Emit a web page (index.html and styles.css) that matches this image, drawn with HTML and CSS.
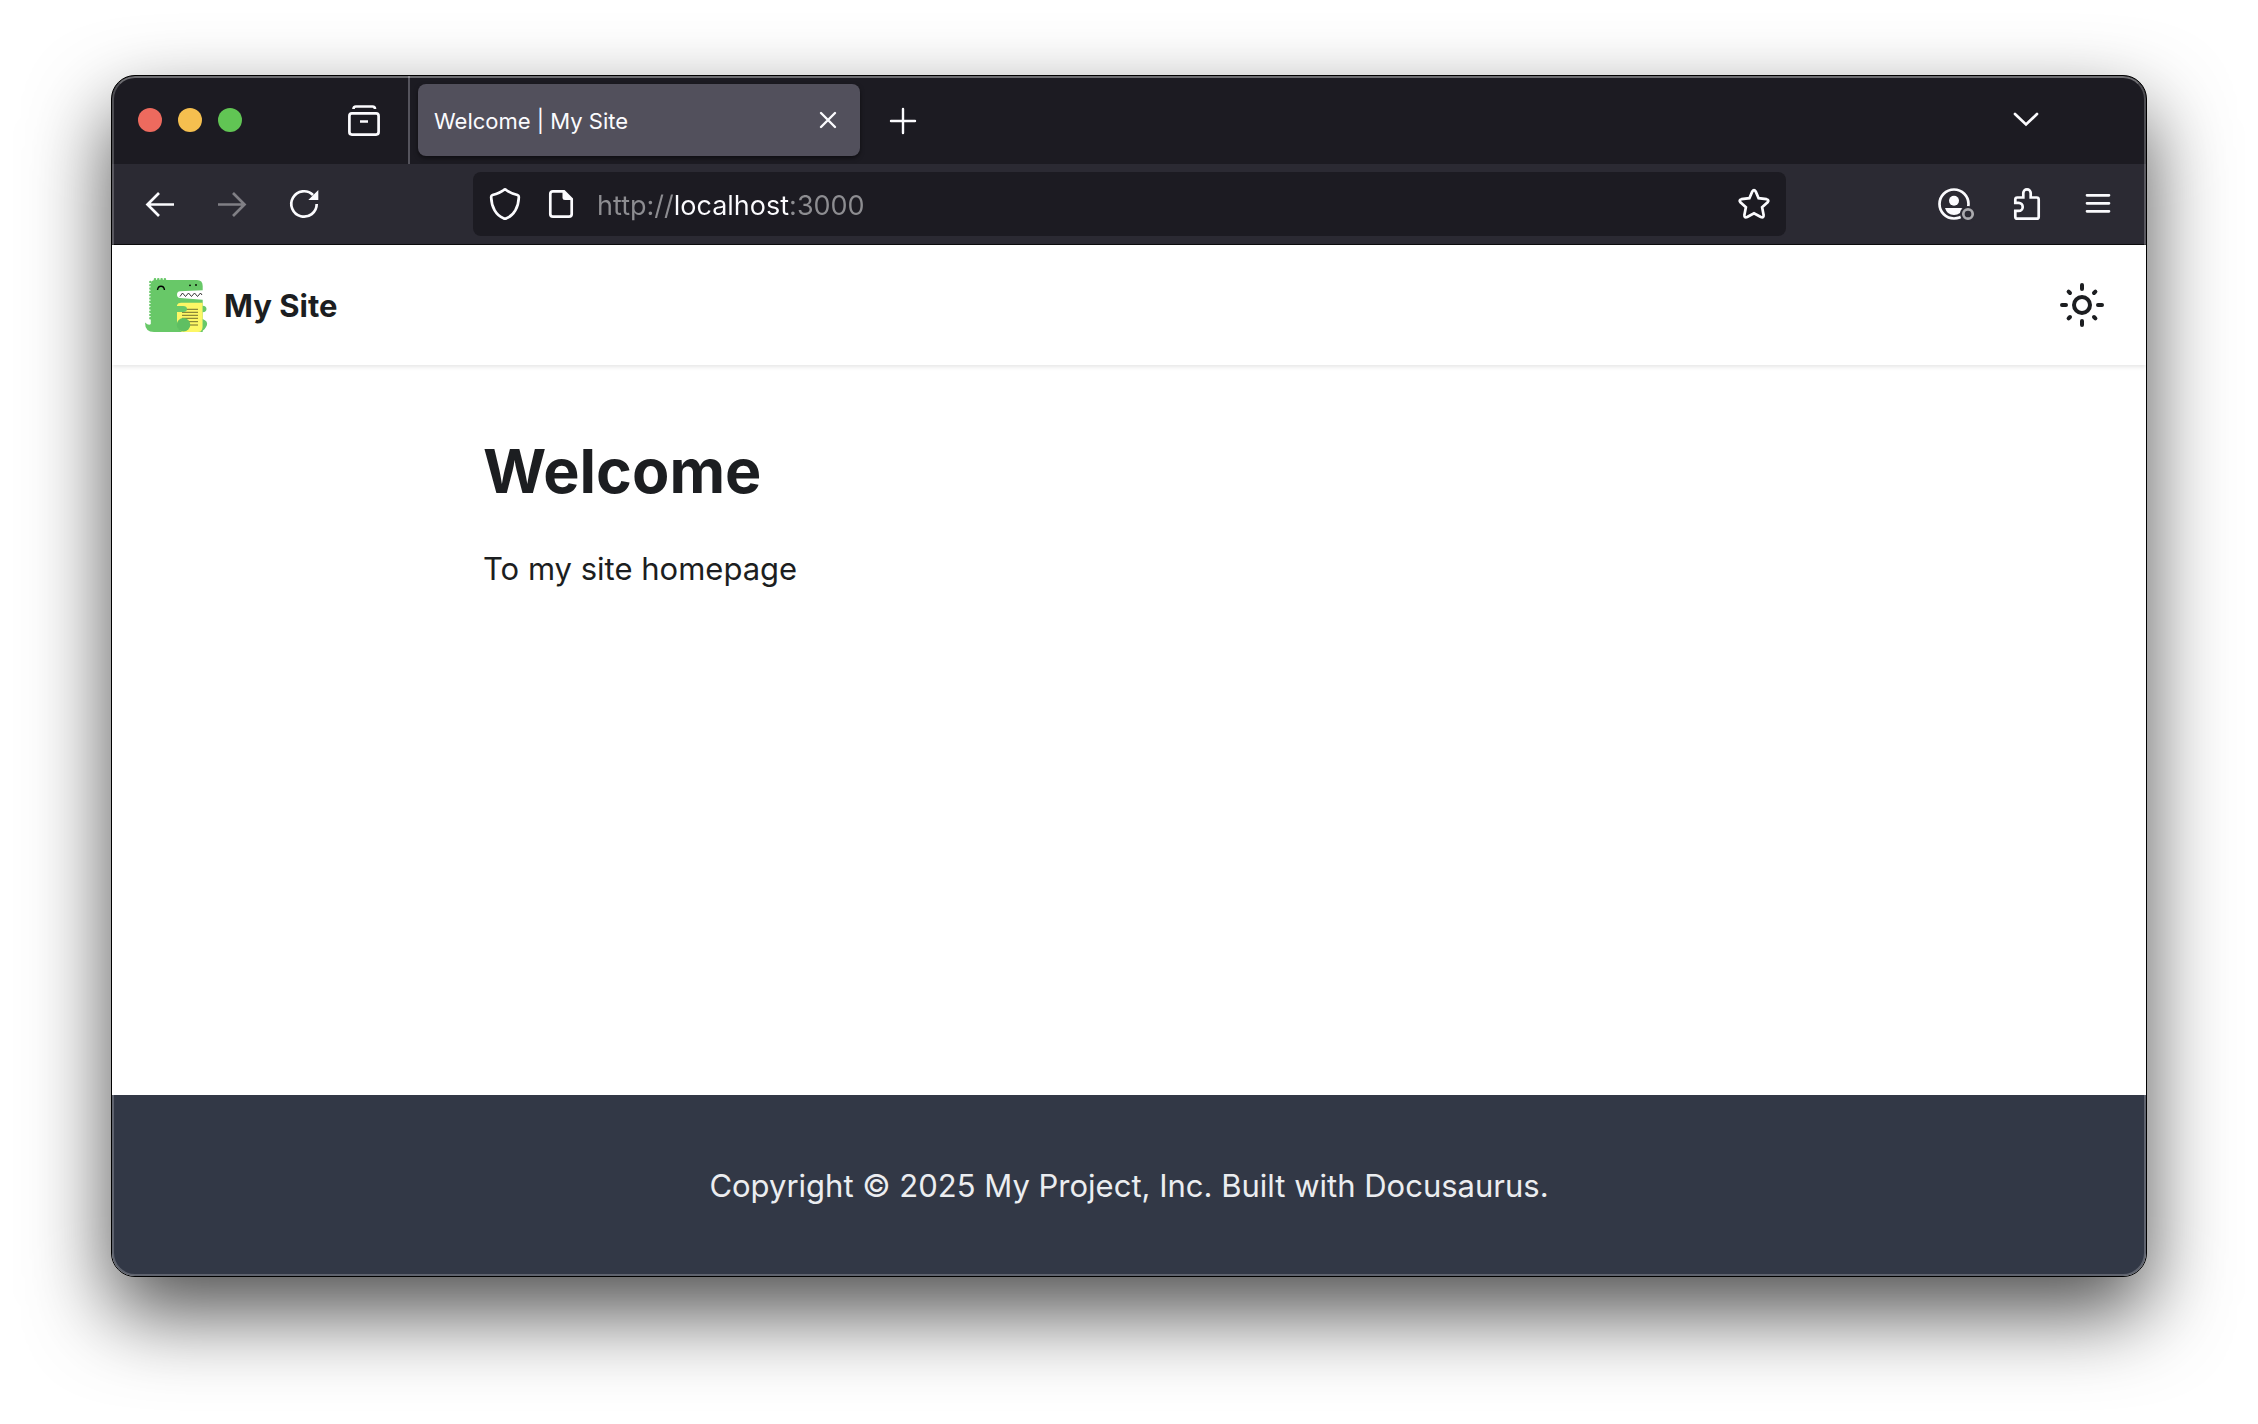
FILE: index.html
```html
<!DOCTYPE html>
<html lang="en">
<head>
<meta charset="utf-8">
<meta name="viewport" content="width=device-width, initial-scale=1">
<title>Welcome | My Site</title>
<link rel="stylesheet" href="styles.css">
</head>
<body>
<div class="window">
  <div class="tabstrip">
    <div class="lights">
      <button class="light light-close" aria-label="Close window"></button>
      <button class="light light-minimize" aria-label="Minimize window"></button>
      <button class="light light-zoom" aria-label="Zoom window"></button>
    </div>
    <button class="icon-button" aria-label="Recent browsing">
      <svg class="icon" viewBox="0 0 32 32"><path d="M5.500 5C5.500 3.500 6.500 2.500 8 2.500H24.500C26 2.500 27 3.500 27 5"/><rect x="1.400" y="9.400" width="29.200" height="21.200" rx="2.500"/><path d="M12 17.500H20"/></svg>
    </button>
    <div class="tabs">
      <div class="tab">
        <span class="tab-title">Welcome | My Site</span>
        <button class="tab-close" aria-label="Close tab"><svg class="icon" viewBox="0 0 32 32"><path class="thin" d="M9 9L23 23M23 9L9 23"/></svg></button>
      </div>
      <button class="icon-button new-tab" aria-label="New tab"><svg class="icon" viewBox="0 0 32 32"><path class="thin" d="M16 5V29M4 17H28"/></svg></button>
    </div>
    <button class="icon-button all-tabs" aria-label="List all tabs"><svg class="icon" viewBox="0 0 32 32"><path d="M5 10L16 20.500L27 10" stroke-linecap="round"/></svg></button>
  </div>

  <div class="toolbar">
    <div class="tools">
      <button class="icon-button" aria-label="Back"><svg class="icon" viewBox="0 0 32 32"><path d="M30 16.500H3.500M15 5L3.500 16.500L15 28"/></svg></button>
      <button class="icon-button" aria-label="Forward" disabled><svg class="icon" viewBox="0 0 32 32"><path d="M2 16.500H28.500M17 5L28.500 16.500L17 28"/></svg></button>
      <button class="icon-button" aria-label="Reload"><svg class="icon" viewBox="0 0 32 32"><path d="M28.700 16A12.700 12.700 0 1 1 25 7"/><path class="solid" d="M30.300 2V12H20.300Z"/></svg></button>
    </div>
    <div class="urlbar">
      <button class="url-button" aria-label="Tracking protection"><svg class="icon" viewBox="0 0 32 32"><path d="M14.800 2Q16 1 17.200 2Q21 5 28.500 7Q30 7.500 29.800 9.500C29.500 19 25 27.500 17.500 30.200Q16 31 14.500 30.200C7 27.500 2.500 19 2.200 9.500Q2 7.500 3.500 7Q11 5 14.800 2Z"/></svg></button>
      <button class="url-button" aria-label="Site information"><svg class="icon" viewBox="0 0 32 32"><path d="M8 3.300H19L26.700 11V26Q26.700 28.700 24 28.700H8Q5.300 28.700 5.300 26V6Q5.300 3.300 8 3.300Z"/><path class="solid" d="M17.500 3V9.500Q17.500 12 20 12H27L19 3Z"/></svg></button>
      <input class="url-input" type="text" aria-label="Address" value="http://localhost:3000" spellcheck="false">
      <button class="url-button" aria-label="Bookmark this page"><svg class="icon" viewBox="0 0 32 32"><path d="M14.300 3.500Q16 .8 17.700 3.500L20.600 10.200L28.500 11.200Q31.500 12 29.600 14.300L24.100 19.300L25.600 27Q25.800 30.300 22.800 29L16 25.200L9.200 29Q6.200 30.300 6.400 27L7.900 19.300L2.400 14.300Q.5 12 3.500 11.200L11.400 10.200Z"/></svg></button>
    </div>
    <div class="tools tools-end">
      <button class="icon-button" aria-label="Account"><svg class="icon" viewBox="0 0 32 32"><circle cx="16" cy="16" r="14.500"/><circle class="solid" cx="16" cy="12.700" r="5"/><path class="solid" d="M7 20H25Q23 27 16 27Q9 27 7 20Z"/><circle class="badge-gap" cx="30" cy="26" r="8"/><circle class="badge" cx="30" cy="26" r="4.700"/></svg></button>
      <button class="icon-button" aria-label="Extensions"><svg class="icon" viewBox="0 0 32 32"><path d="M5.300 14.900V11.500a2 2 0 0 1 2-2H13.300V5a3.700 3.700 0 0 1 7.400 0V9.500H26.700a2 2 0 0 1 2 2V28.700a2 2 0 0 1-2 2H7.300a2 2 0 0 1-2-2V22.900H8.700a4 4 0 0 0 0-8Z"/></svg></button>
      <button class="icon-button" aria-label="Menu"><svg class="icon" viewBox="0 0 32 32"><path d="M5 7.300H27M5 15.300H27M5 23.300H27" stroke-linecap="round"/></svg></button>
    </div>
  </div>

  <div class="page">
    <header class="navbar">
      <a class="brand" href="#">
        <svg class="logo" viewBox="0 0 64 64" aria-hidden="true">
          <path class="spikes" d="M6.400 9V48M11 6.400H23"/>
          <path class="dino" d="M1 49.500Q5 53 6.800 51V12Q6.800 7 11 7H53Q58.700 7 58.700 13V17.200L36 18.300Q33 18.600 33 21.700Q33 24.700 36 25L58.700 26.700V59H10Q1 59 1 49.500Z"/>
          <path class="book" d="M33 32Q34 29.700 37 29.700H58.700V54Q58.700 59 54 59H38Q33 55 33 50Z"/>
          <path class="book-lines" d="M38 36.300H54M38 39.300H54M38 42.300H54M38 45.300H54M38 48.700H54M38 52H54"/>
          <path class="dino" d="M32 33H39Q43 33 43 36Q43 39 39 39H32Z"/>
          <circle class="foot" cx="39.500" cy="51.700" r="6.800"/>
          <path class="dino" d="M58.700 32.700Q62.500 33 62.500 36Q62.500 39 58.700 39.300Z"/>
          <path class="dino" d="M58.700 46Q64 48 63 52Q61 57 57 58.500Q58.700 56 58.700 54Z"/>
          <path class="face" d="M13.500 17Q14 13.300 17 13.300Q20 13.300 20.500 17"/>
          <path class="teeth" d="M36 23.500L38.500 20L41.500 23.500L44.500 20L47.500 23.500L50.500 20L53.500 23.500L56.500 20L58 22"/>
          <circle cx="46" cy="12.300" r=".9"/><circle cx="52" cy="12" r=".9"/>
        </svg>
        <b class="brand-name">My Site</b>
      </a>
      <button class="theme-toggle" aria-label="Switch between dark and light mode">
        <svg class="sun" viewBox="0 0 24 24"><circle cx="12" cy="12" r="4"/><path d="M12 2V4M12 20V22M2 12H4M20 12H22M5.300 5.300L6 6M18 18L18.700 18.700M5.300 18.700L6 18M18 6L18.700 5.300"/></svg>
      </button>
    </header>
    <main class="main">
      <article class="article">
        <h1 class="title">Welcome</h1>
        <p class="text">To my site homepage</p>
      </article>
    </main>
    <footer class="footer">Copyright © 2025 My Project, Inc. Built with Docusaurus.</footer>
  </div>
</div>
</body>
</html>
```

FILE: styles.css
```css
* {
  box-sizing: border-box;
}

body {
  margin: 0;
  min-height: 100vh;
  padding: 75px 111px 147px;
  display: flex;
  background: #fff;
  color: #1c1e21;
  font-family: Inter, "Liberation Sans", sans-serif;
}

button {
  margin: 0;
  padding: 0;
  border: 0;
  background: none;
  color: inherit;
}

/* Browser window */
.window {
  position: relative;
  flex: 1;
  min-width: 0;
  display: flex;
  flex-direction: column;
  overflow: hidden;
  border: 1px solid #000;
  border-radius: 24px;
  background: #1c1b22;
  box-shadow: 0 36px 82px rgba(0, 0, 0, 0.69);
}

.window::after {
  content: "";
  position: absolute;
  inset: 0;
  border: 2px solid rgba(255, 255, 255, 0.22);
  border-top-color: rgba(255, 255, 255, 0.36);
  border-radius: 23px;
  pointer-events: none;
}

.icon {
  width: 32px;
  height: 32px;
  fill: none;
  stroke: currentColor;
  stroke-width: 2.7;
  overflow: visible;
}

.icon .thin {
  stroke-width: 2.4;
  stroke-linecap: round;
}

.icon .solid {
  fill: currentColor;
  stroke: none;
}

.icon .badge-gap {
  fill: #2b2a33;
  stroke: none;
}

.icon .badge {
  stroke: #aaaaae;
}

.icon-button {
  display: grid;
  place-items: center;
  width: 64px;
  height: 64px;
}

.icon-button:disabled {
  color: #807f85;
}

/* Tab strip */
.tabstrip {
  display: flex;
  align-items: center;
  height: 88px;
  color: #fbfbfe;
}

.lights {
  display: flex;
  gap: 16px;
  padding: 0 90px 0 26px;
}

.light {
  width: 24px;
  height: 24px;
  border-radius: 50%;
}

.light-close {
  background: #ed6a5e;
}

.light-minimize {
  background: #f5bf4f;
}

.light-zoom {
  background: #61c554;
}

.tabs {
  flex: 1;
  align-self: stretch;
  display: flex;
  align-items: center;
  margin-left: 12px;
  padding-left: 8px;
  border-left: 2px solid #55545d;
}

.tab {
  flex: 0 1 442px;
  display: flex;
  align-items: center;
  height: 72px;
  padding: 0 8px 0 16px;
  border-radius: 8px;
  background: #52505c;
  box-shadow: 0 2px 4px rgba(0, 0, 0, 0.5);
}

.tab-title {
  flex: 1;
  padding-top: 2px;
  font-size: 22px;
  line-height: 32px;
  white-space: nowrap;
}

.tab-close {
  display: grid;
  place-items: center;
  width: 48px;
  height: 48px;
}

.new-tab {
  margin-left: 11px;
}

.all-tabs {
  margin-right: 88px;
}

/* Navigation toolbar */
.toolbar {
  display: grid;
  grid-template-columns: 361px minmax(0, 1fr) 360px;
  align-items: center;
  height: 81px;
  border-bottom: 1px solid #0c0c0d;
  background: #2b2a33;
  color: #fbfbfe;
}

.tools {
  display: flex;
  gap: 8px;
  padding: 0 16px;
}

.tools-end {
  justify-content: flex-end;
}

.urlbar {
  display: flex;
  align-items: center;
  height: 64px;
  padding: 0 4px;
  border-radius: 8px;
  background: #1c1b22;
}

.url-button {
  display: grid;
  place-items: center;
  width: 56px;
  height: 56px;
}

.url-input {
  flex: 1;
  min-width: 0;
  height: 48px;
  padding: 2px 0 0 8px;
  border: 0;
  outline: 0;
  /* The host is lit, the scheme and the port are dimmed. */
  background: linear-gradient(90deg, #8d8d91 84px, #fbfbfe 84px 202px, #8d8d91 202px);
  background-clip: text;
  color: transparent;
  font-family: inherit;
  font-size: 27px;
}

/* Site */
.page {
  flex: 1;
  display: flex;
  flex-direction: column;
  background: #fff;
}

.navbar {
  display: flex;
  align-items: center;
  justify-content: space-between;
  height: 120px;
  padding: 0 32px;
  box-shadow: 0 2px 4px rgba(0, 0, 0, 0.1);
}

.brand {
  display: flex;
  align-items: center;
  gap: 16px;
  color: inherit;
  text-decoration: none;
}

.logo {
  width: 64px;
  height: 64px;
}

.dino {
  fill: #68c868;
}

.foot {
  fill: #5fbf62;
}

.spikes {
  fill: none;
  stroke: #68c868;
  stroke-width: 2.6;
  stroke-linecap: round;
  stroke-dasharray: 0 3.3;
}

.book {
  fill: #fdf765;
}

.book-lines {
  fill: none;
  stroke: #4c4a20;
  stroke-width: 0.8;
}

.face {
  fill: none;
  stroke: #000;
  stroke-width: 1.4;
}

.teeth {
  fill: none;
  stroke: #222;
  stroke-width: 0.9;
}

.brand-name {
  padding-top: 2px;
  font-size: 31px;
  font-weight: 700;
  line-height: 48px;
}

.theme-toggle {
  display: grid;
  place-items: center;
  width: 64px;
  height: 64px;
  color: #1c1e21;
}

.sun {
  width: 48px;
  height: 48px;
  fill: none;
  stroke: currentColor;
  stroke-width: 2;
  stroke-linecap: round;
}

.main {
  flex: 1;
  display: grid;
  grid-template-columns: 1fr 4fr 1fr;
  padding: 64px 0;
}

.article {
  grid-column: 2;
  padding: 0 32px;
}

.title {
  margin: 0 0 30px;
  font-size: 61px;
  line-height: 84px;
}

.text {
  margin: 0;
  font-size: 31px;
  line-height: 52px;
}

.footer {
  padding: 65px 32px 64px;
  background: #323846;
  color: #ebedf0;
  font-size: 31px;
  line-height: 52px;
  text-align: center;
}
```
